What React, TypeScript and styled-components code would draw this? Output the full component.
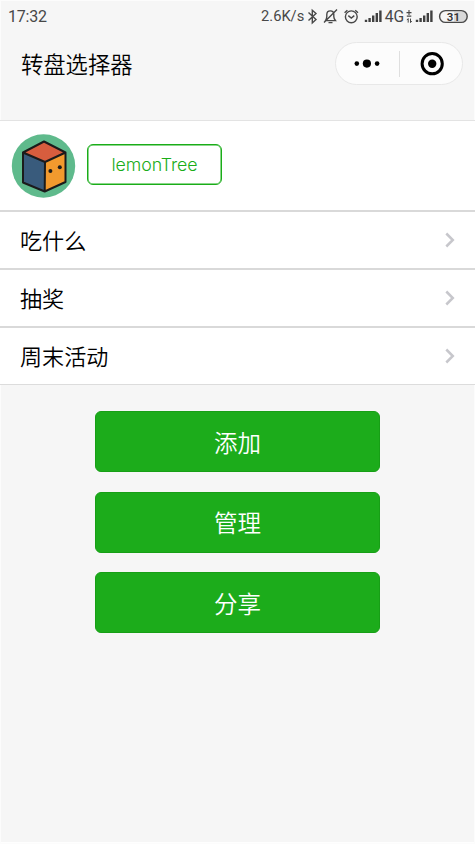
import React from 'react';
import styled, { createGlobalStyle } from 'styled-components';

const Global = createGlobalStyle`
  *, *::before, *::after { box-sizing: border-box; }
  body { margin: 0; background: #f6f6f6; }
  svg { display: block; }
`;

const Screen = styled.main`
  width: 475px;
  height: 844px;
  overflow: hidden;
  background: #f6f6f6;
  box-shadow: inset 0 0 0 1px #fcfcfc, inset 0 -2px 0 #fefefe;
  font-family: Roboto, 'Noto Sans CJK SC', sans-serif;
  color: #000;
`;

const StatusBar = styled.div`
  display: flex;
  align-items: center;
  justify-content: space-between;
  height: 33px;
  padding: 0 7px 0 8px;
  color: #484848;
`;

const Clock = styled.span`
  font-size: 16px;
  line-height: 32px;
  letter-spacing: -0.2px;
`;

const StatusIcons = styled.div`
  display: flex;
  align-items: center;
  width: 207px;
  height: 33px;
`;

const Speed = styled.span`
  width: 45px;
  font-size: 14.7px;
  line-height: 33px;
  white-space: nowrap;
`;

const TitleBar = styled.header`
  display: flex;
  justify-content: space-between;
  height: 88px;
  padding: 9px 12px 0 21px;
  border-bottom: 1px solid #e3e3e3;
`;

const Title = styled.h1`
  margin: 0;
  font-size: 22.3px;
  font-weight: 350;
  line-height: 42px;
  font-family: 'Noto Sans CJK SC', sans-serif;
`;

const Capsule = styled.div`
  display: flex;
  align-items: center;
  width: 128px;
  height: 43px;
  border: 1px solid #e8e8e8;
  border-radius: 22px;
  background: #fcfcfc;
`;

const CapsuleHalf = styled.div`
  display: flex;
  flex: 1;
  align-items: center;
  justify-content: center;
`;

const CapsuleDivider = styled.div`
  width: 1px;
  height: 26px;
  background: #dfdfdf;
`;

const Profile = styled.section`
  display: flex;
  height: 89px;
  padding: 13px 0 0 11px;
  background: #fff;
`;

const UserName = styled.button`
  width: 135px;
  height: 41.5px;
  margin: 9.5px 0 0 11px;
  padding: 0;
  border: 1px solid #1aad19;
  box-shadow: inset 0 0 0 0.5px #1aad19;
  border-radius: 6px;
  background: #fff;
  color: #1aad19;
  font: 300 17.8px/39px Inter, sans-serif;
  letter-spacing: -0.1px;
`;

const Row = styled.div`
  display: flex;
  align-items: center;
  justify-content: space-between;
  height: 58px;
  padding: 0 19px 0 20px;
  border-top: 2px solid #d9d9d9;
  background: #fff;

  &:last-child { height: 59px; border-bottom: 1px solid #dcdcdc; }
`;

const RowLabel = styled.span`
  padding-bottom: 2px;
  font: 350 22.1px/32px 'Noto Sans CJK SC', sans-serif;
`;

const Actions = styled.div`
  display: flex;
  flex-direction: column;
  align-items: center;
  gap: 19.5px;
  padding-top: 26.4px;
`;

const Action = styled.button`
  width: 285px;
  height: 61px;
  padding: 0;
  border: 1px solid #179f16;
  border-radius: 6px;
  background: #1cac1b;
  color: #fff;
  font: 350 23.5px/58px 'Noto Sans CJK SC', sans-serif;
`;

function Signal() {
  return (
    <path d="M1 12.5v-2.2M4.6 12.5V8.5M8.2 12.5V6M11.8 12.5V3.5M15.4 12.5V1" stroke="#404040" strokeWidth="2.4" />
  );
}

function StatusGlyphs() {
  return (
    <svg width="162" height="20" viewBox="306 6.4 162 20" fill="none" stroke="#484848" strokeWidth="1.4">
      <path d="m308.5 12 7.5 7-3.7 3.3V9.7l3.7 3.3-7.5 7" />
      <path d="M325.5 20h10c-1-1.2-1.7-2-1.7-4v-2c0-5-7-5-7 0v2c0 2-.5 2.8-1.3 4ZM328.5 22h4M324 22l13-13" />
      <circle cx="351.3" cy="16.2" r="5.9" />
      <path d="m348.3 15 3 2.5 3-2.5M344.6 12.2l2.8-2.6M358 12.2l-2.8-2.6" />
      <g transform="translate(365 8.8)"><Signal /></g>
      <text x="384.8" y="21.4" fill="#484848" stroke="none" fontFamily="Roboto" fontSize="15.7">4G</text>
      <path d="M409 9.5v5M406.5 12h5M406.8 15.5h4.5" strokeWidth="1.1" />
      <path d="m408.2 22v-4l-1.3 1.5M410.5 18v4l1.3-1.5" strokeWidth="1" />
      <g transform="translate(416 8.8)"><Signal /></g>
      <path d="M454 11h8a5 5 0 0 1 0 10h-8Z" fill="#d9d9d9" stroke="none" />
      <rect x="439.6" y="10" width="27.6" height="11.8" rx="5.9" />
      <text x="453.4" y="20.1" fill="#333" stroke="none" textAnchor="middle" fontFamily="Roboto" fontSize="11.5" fontWeight="600">31</text>
    </svg>
  );
}

function Avatar() {
  return (
    <svg width="65" height="65" viewBox="0 0 65 65">
      <circle cx="32.5" cy="32" r="31.7" fill="#5fba8c" />
      <path d="M33 7.5 12 18.5 34 28 54.5 18.5Z" fill="#d75d3e" />
      <path d="M12 18.5V48.5L33.7 57.5 34 28Z" fill="#395b7c" />
      <path d="M34 28 33.7 57.5 54.5 48V18.5Z" fill="#f29a2e" />
      <path d="M33 7.5 12 18.5V48.5L33.7 57.5 54.5 48V18.5ZM12 18.5 34 28 54.5 18.5M34 28 33.7 57.5" fill="none" stroke="#1b1b1b" strokeWidth="2" strokeLinejoin="round" />
      <circle cx="39.4" cy="37" r="2" fill="#1b1b1b" />
      <circle cx="48.8" cy="33.3" r="2" fill="#1b1b1b" />
    </svg>
  );
}

function Chevron() {
  return (
    <svg width="12" height="16" viewBox="0 0 12 16">
      <path d="m2.3 1.5 6.5 6.5-6.5 6.5" fill="none" stroke="#c7c7cc" strokeWidth="2.5" />
    </svg>
  );
}

const wheels = ['吃什么', '抽奖', '周末活动'];
const actions = ['添加', '管理', '分享'];

export default function App() {
  return (
    <>
      <Global />
      <Screen>
        <StatusBar>
          <Clock>17:32</Clock>
          <StatusIcons>
            <Speed>2.6K/s</Speed>
            <StatusGlyphs />
          </StatusIcons>
        </StatusBar>
        <TitleBar>
          <Title>转盘选择器</Title>
          <Capsule>
            <CapsuleHalf>
              <svg width="26" height="10" viewBox="0 0 26 10">
                <circle cx="2.8" cy="4.6" r="2.3" />
                <circle cx="12.9" cy="4.6" r="4.1" />
                <circle cx="23.1" cy="4.6" r="2.3" />
              </svg>
            </CapsuleHalf>
            <CapsuleDivider />
            <CapsuleHalf>
              <svg width="26" height="24" viewBox="0 0 26 24">
                <circle cx="14.2" cy="11.7" r="10.1" fill="none" stroke="#000" strokeWidth="3" />
                <circle cx="14.2" cy="11.7" r="4.2" />
              </svg>
            </CapsuleHalf>
          </Capsule>
        </TitleBar>
        <Profile>
          <Avatar />
          <UserName>lemonTree</UserName>
        </Profile>
        <div>
          {wheels.map((name) => (
            <Row key={name}>
              <RowLabel>{name}</RowLabel>
              <Chevron />
            </Row>
          ))}
        </div>
        <Actions>
          {actions.map((label) => (
            <Action key={label}>{label}</Action>
          ))}
        </Actions>
      </Screen>
    </>
  );
}
